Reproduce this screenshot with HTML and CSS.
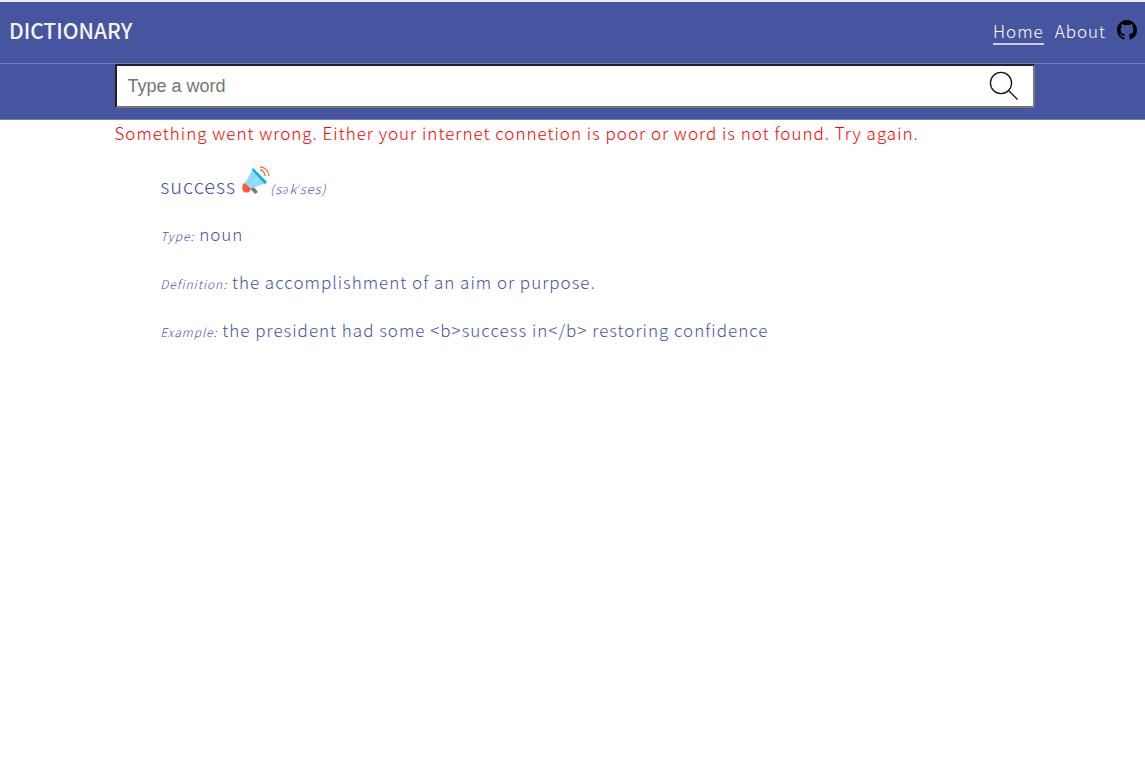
FILE: index.html
```html
<!DOCTYPE html>
<html lang="en">
<head>
<meta charset="utf-8">
<title>Dictionary</title>
<link rel="stylesheet" href="styles.css">
</head>
<body>
<header class="header">
  <div class="topbar">
    <h1 class="brand">DICTIONARY</h1>
    <nav class="nav">
      <a class="nav-link active" href="#">Home</a>
      <a class="nav-link" href="#about">About</a>
      <a class="github" href="#github" aria-label="GitHub">
        <svg viewBox="0 0 16 16" width="20" height="20" fill="#000"><path d="M8 0C3.58 0 0 3.58 0 8c0 3.54 2.29 6.53 5.47 7.59.4.07.55-.17.55-.38 0-.19-.01-.82-.01-1.49-2.01.37-2.53-.49-2.69-.94-.09-.23-.48-.94-.82-1.13-.28-.15-.68-.52-.01-.53.63-.01 1.08.58 1.23.82.72 1.21 1.87.87 2.33.66.07-.52.28-.87.51-1.07-1.78-.2-3.64-.89-3.64-3.95 0-.87.31-1.59.82-2.15-.08-.2-.36-1.02.08-2.12 0 0 .67-.21 2.2.82a7.6 7.6 0 0 1 4 0c1.53-1.04 2.2-.82 2.2-.82.44 1.1.16 1.92.08 2.12.51.56.82 1.27.82 2.15 0 3.07-1.87 3.75-3.65 3.95.29.25.54.73.54 1.48 0 1.07-.01 1.93-.01 2.2 0 .21.15.46.55.38A8.01 8.01 0 0 0 16 8c0-4.42-3.58-8-8-8z"/></svg>
      </a>
    </nav>
  </div>
  <form class="search">
    <input class="search-input" type="text" placeholder="Type a word" aria-label="Type a word">
    <button class="search-button" type="button" aria-label="Search">
      <svg viewBox="0 0 30 30" width="30" height="30" fill="none" stroke="#111" stroke-width="1.3"><circle cx="12" cy="12" r="10.6"/><path d="M19.5 19.5L28.5 28.5"/></svg>
    </button>
  </form>
</header>
<main class="content">
  <p class="error">Something went wrong. Either your internet connetion is poor or word is not found. Try again.</p>
  <section class="entry">
    <div class="word-row">
      <h2 class="word">success</h2>
      <button class="speak" type="button" aria-label="Play pronunciation">
        <svg viewBox="0 0 28 28" width="28" height="28">
          <path d="M7 21l6 7 3-2-6-7z" fill="#78757d"/>
          <path d="M11 3L24 17 8 23 3 17z" fill="#8cdcf7"/>
          <path d="M18 10L6 22" stroke="#b5e9fb" stroke-width=".8"/>
          <path d="M11 2l14 14-2 2L10 4z" fill="#03ace8"/>
          <path d="M3 17l6 6-1 2c-2 2-5 2-7 0-1-2-1-5 0-7z" fill="#ff5c35"/>
          <path d="M18 4c3 0 5 3 5 6M18 1c5 0 9 4 9 9" fill="none" stroke="#ff6b48" stroke-width="1.3"/>
        </svg>
      </button>
      <i class="label">(səkˈses)</i>
    </div>
    <p class="row"><i class="label">Type:</i> noun</p>
    <p class="row"><i class="label">Definition:</i> the accomplishment of an aim or purpose.</p>
    <p class="row"><i class="label">Example:</i> the president had some &lt;b&gt;success in&lt;/b&gt; restoring confidence</p>
  </section>
</main>
</body>
</html>
```
FILE: styles.css
```css
body {
  margin: 0;
  background: #fff;
  color: #4655a0;
  font-family: "Noto Sans CJK SC", "Noto Sans", sans-serif;
  font-size: 17px;
  font-weight: 200;
  line-height: 24px;
  letter-spacing: 1px;
}

h1, h2, p {
  margin: 0;
}

button {
  padding: 0;
  border: 0;
  background: none;
  cursor: pointer;
}

svg {
  display: block;
}

.header {
  border-top: 2px solid #ececf0;
  border-bottom: 1px solid #7480bb;
  background: #4655a0;
}

.topbar {
  display: flex;
  align-items: center;
  justify-content: space-between;
  height: 61px;
  padding: 0 8px 0 9px;
  border-bottom: 1px solid #7480bb;
}

.brand {
  padding-bottom: 6px;
  color: #f4f4fa;
  font-size: 21px;
  font-weight: 500;
  line-height: 28px;
  letter-spacing: 0;
}

.nav {
  display: flex;
  align-items: center;
  gap: 11px;
  padding-bottom: 6px;
}

.nav-link {
  padding: 5px 0 1px;
  border-bottom: 2px solid transparent;
  color: #fff;
  font-weight: 300;
  line-height: 23px;
  text-decoration: none;
}

.nav-link.active {
  border-color: #d0cddb;
}

.search {
  display: flex;
  align-items: center;
  box-sizing: border-box;
  width: 80%;
  margin-left: 10%;
  padding-bottom: 11px;
}

.search-input {
  flex: 1;
  min-width: 0;
  height: 40px;
  margin-right: -4px;
  padding: 0 48px 0 11px;
  border: 2px inset #767676;
  background: #fff;
  font: 18px "Liberation Sans", Arial, sans-serif;
}

.search-button {
  margin-left: -42px;
  margin-right: 12px;
}

.error {
  padding-left: 10%;
  color: #f00;
  line-height: 26px;
}

.entry {
  display: flex;
  flex-direction: column;
  gap: 24px;
  padding: 20px 14% 24px;
}

.word-row {
  display: flex;
  align-items: baseline;
}

.word {
  margin-right: 6px;
  font-size: 20px;
  font-weight: 200;
}

.label {
  font-size: 12px;
  line-height: 16px;
}

.word-row .label {
  font-size: 13px;
}
```
